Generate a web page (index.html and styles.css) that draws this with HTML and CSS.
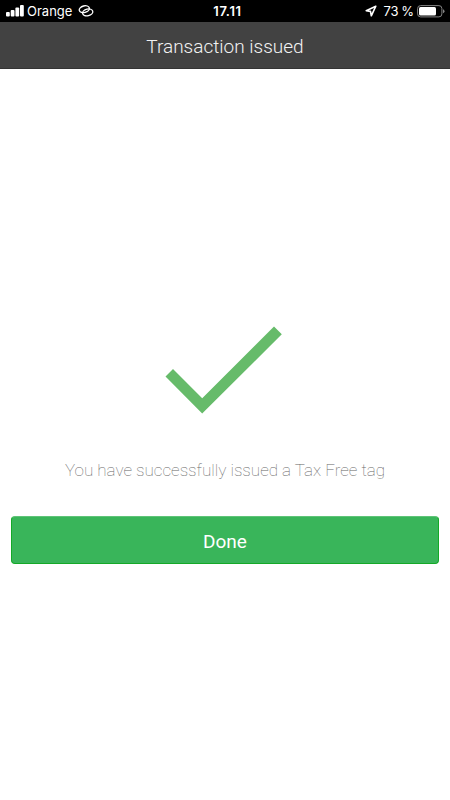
FILE: index.html
```html
<!DOCTYPE html>
<html lang="en">
  <head>
    <meta charset="utf-8" />
    <meta name="viewport" content="width=device-width, initial-scale=1" />
    <title>Transaction issued</title>
    <link rel="stylesheet" href="styles.css">
  </head>

  <body>
    <div class="status">
      <div class="status-left">
        <svg class="signal" width="18" height="12" viewBox="0 0 18 12" fill="#fff">
          <rect x="0" y="7" width="3.8" height="4.500" rx="1" />
          <rect x="4.700" y="5" width="3.8" height="6.500" rx="1" />
          <rect x="9.400" y="2.500" width="3.8" height="9" rx="1" />
          <rect x="14" y="0" width="3.8" height="11.500" rx="1" />
        </svg>
        <span class="carrier">Orange</span>
        <svg class="link" width="16" height="14" viewBox="0 0 16 14" fill="none" stroke="#fff" stroke-width="1.300">
          <ellipse cx="6.300" cy="5.200" rx="5.200" ry="3.300" transform="rotate(-14 6.300 5.200)" />
          <ellipse cx="9.700" cy="8.400" rx="5.200" ry="3.300" transform="rotate(-14 9.700 8.400)" />
        </svg>
      </div>
      <span class="time">17.11</span>
      <div class="status-right">
        <svg class="location" width="12" height="12" viewBox="0 0 12 12" fill="none" stroke="#fff" stroke-width="1.600" stroke-linejoin="round">
          <path d="M10.800 1.200L1.200 5.700L5.500 6.400L6.300 10.800Z" />
        </svg>
        <span class="percent">73 %</span>
        <svg class="battery" width="28" height="13" viewBox="0 0 28 13">
          <rect x=".6" y=".6" width="24.300" height="11.300" rx="3" fill="none" stroke="#858585" />
          <rect x="2" y="2" width="17" height="8.500" rx="1.500" fill="#fff" />
          <path d="M26 4.300Q27.500 4.700 27.500 6.300T26 8.300Z" fill="#858585" />
        </svg>
      </div>
    </div>
    <div class="header">
      <span class="title">Transaction issued</span>
    </div>
    <div class="content">
      <svg class="check" width="118" height="88" viewBox="0 0 118 88">
        <path d="M.5 50.500L8 43L37.200 72.200L109 .5L116.800 8.300L37.200 87.500Z" fill="#66bb6a" />
      </svg>
      <p class="message">You have successfully issued a Tax Free tag</p>
      <button class="done">Done</button>
    </div>
  </body>
</html>
```

FILE: styles.css
```css
* {
  box-sizing: border-box;
}
body {
  margin: 0;
  min-height: 800px;
  background: #fff;
  font-family: Roboto, sans-serif;
}
.status {
  display: grid;
  grid-template-columns: 1fr auto 1fr;
  align-items: center;
  height: 22px;
  padding: 0 5px 0 6px;
  background: #000;
  color: #fff;
  font-family: Inter, sans-serif;
  font-size: 13px;
}
.status svg {
  display: block;
}
.status-left,
.status-right {
  display: flex;
  align-items: center;
}
.status-right {
  justify-content: flex-end;
}
.carrier {
  margin-left: 3px;
}
.link {
  margin-left: 6px;
}
.time {
  padding-left: 4px;
  font-weight: 600;
  letter-spacing: 0.6px;
}
.percent {
  margin: 0 3px 0 6px;
  word-spacing: -1px;
}
.header {
  display: flex;
  align-items: center;
  justify-content: center;
  height: 47px;
  padding-top: 2px;
  background: #424242;
  border-bottom: 1px solid #343434;
  color: #f2f2f2;
}
.title {
  font-size: 19px;
  font-weight: 300;
}
.content {
  display: flex;
  flex-direction: column;
  align-items: center;
  padding: 257px 11px 0;
}
.check {
  display: block;
  margin-right: 2px;
}
.message {
  margin: 46px 0 0;
  color: #666;
  font-size: 17px;
  font-weight: 100;
  line-height: 20px;
  white-space: nowrap;
}
.done {
  width: 100%;
  height: 48px;
  margin-top: 36px;
  padding: 3px 0 0;
  border: 1px solid #14a928;
  border-top-color: #5fc478;
  border-radius: 4px;
  background: #39b55a;
  color: #fff;
  font-family: inherit;
  font-size: 19px;
  line-height: 43px;
}
```
